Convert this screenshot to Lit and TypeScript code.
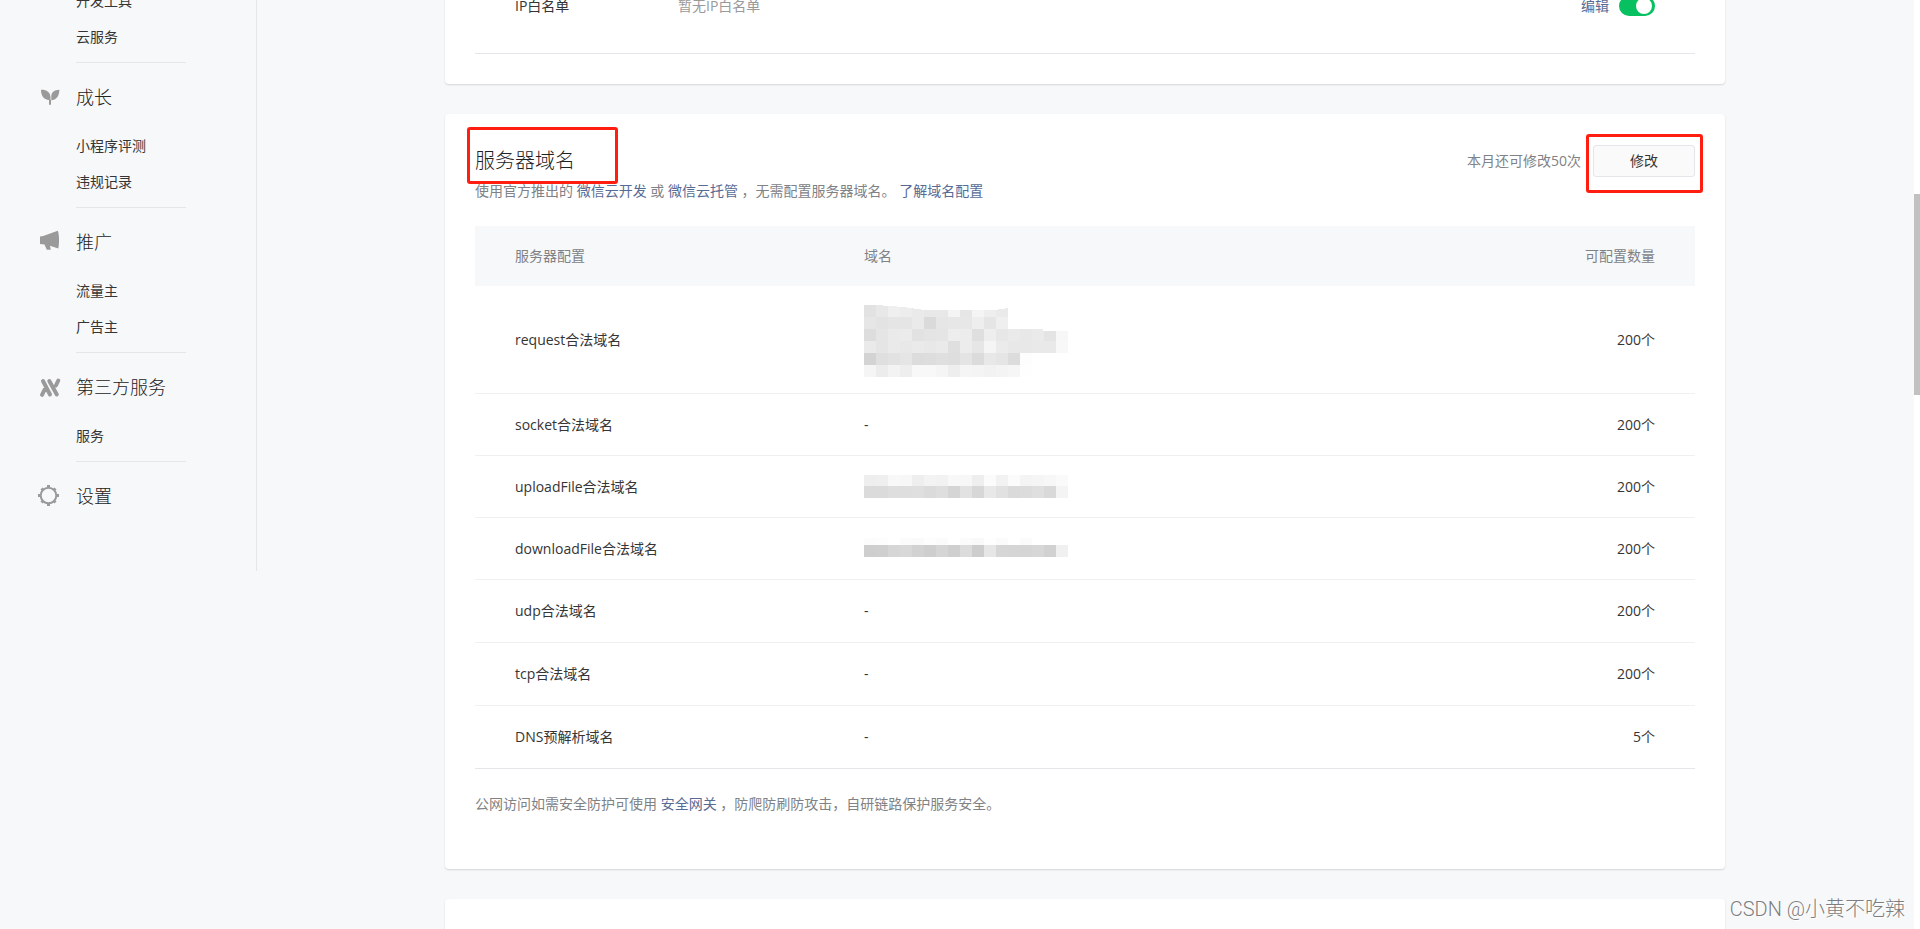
import { LitElement, html, css, svg } from "lit";
import { customElement } from "lit/decorators.js";

type Mosaic = { height: number; rows: { y: number; h: number; cells: string }[] };

/* Each cell is one hex pair: the grey level of a 12px block. */
const CELL = 12;
const mosaics: Record<string, Mosaic> = {
  request: {
    height: 74,
    rows: [
      { y: 2, h: 12, cells: "e2 e8 ef ed ea e8 e8 f4 e6 f4 ee ea" },
      { y: 14, h: 12, cells: "e6 e3 e5 e5 ea da e6 e7 e7 ee e5 ef" },
      { y: 26, h: 12, cells: "dd e5 ea eb e2 e4 e5 ed ec df ee e7 ea e8 ea e4 f7" },
      { y: 38, h: 12, cells: "ea e5 ea e8 ea e8 ea df ec e6 f5 eb e8 e8 e9 e9 f8" },
      { y: 50, h: 12, cells: "d3 df e2 e5 dc dd df de e4 db e8 e5 dc fd" },
      { y: 62, h: 12, cells: "f5 ec f3 ee f8 f8 f5 ee f5 f4 f2 f4 f6 fe" },
    ],
  },
  upload: {
    height: 24,
    rows: [
      { y: 0, h: 11, cells: "ee ef f8 f7 ee f3 f2 f8 f7 ee fb f2 fb f4 f5 f7 fa" },
      { y: 11, h: 12, cells: "db db de de df db de d5 e2 d7 e8 e1 da dc df d9 f4" },
    ],
  },
  download: {
    height: 32,
    rows: [
      { y: 5, h: 7, cells: "fc fd ff fb fa fd fb ff fb f9 fe fb ff fb ff ff ff" },
      { y: 12, h: 12, cells: "ce cf d6 d8 d2 ce d5 cf dc cd e6 d6 d5 d5 d7 d1 f0" },
    ],
  },
};

const icons = {
  sprout: svg`<path d="M1 2.700c5.500-.2 9.300 2.500 9.700 7.500.3-4.500 3.300-7.500 8.700-7.500-.2 6.500-3 10.300-8.400 10.500v4.500H9v-4.600C3.700 12.500 1 8.700 1 2.700z"/><path d="M10.900 6.500v6.500" stroke="#f7f8fa" stroke-width=".8"/>`,
  horn: svg`<path d="M0 4.500l3.200-.5L17.800-1.300C19.400 2 19.400 13 18.200 16.600L10 13.800l.8 4H6.800L4.500 12.600 0 12z"/>`,
  service: svg`<path d="M3 4l7 13.500M9.300 4l7.500 13.500M18.300 3.500L15.900 8.500M2 17.800L4.500 12.800" stroke="currentColor" stroke-width="4" stroke-linecap="round" fill="none"/>`,
  gear: svg`<g transform="translate(-1.500 -.5)"><circle cx="10" cy="10" r="7.800" fill="none" stroke="currentColor" stroke-width="2"/><path d="M10 -.5v3M10 17.500v3M-.5 10h3M17.500 10h3M3 3l1.800 1.800M15.200 15.200L17 17M17 3l-1.800 1.800M4.800 15.200L3 17" stroke="currentColor" stroke-width="3"/></g>`,
};

const sections: { title?: string; icon?: keyof typeof icons; items: string[] }[] = [
  { items: ["开发工具", "云服务"] },
  { title: "成长", icon: "sprout", items: ["小程序评测", "违规记录"] },
  { title: "推广", icon: "horn", items: ["流量主", "广告主"] },
  { title: "第三方服务", icon: "service", items: ["服务"] },
  { title: "设置", icon: "gear", items: [] },
];

const domains: { name: string; mosaic?: string; count: number }[] = [
  { name: "request合法域名", mosaic: "request", count: 200 },
  { name: "socket合法域名", count: 200 },
  { name: "uploadFile合法域名", mosaic: "upload", count: 200 },
  { name: "downloadFile合法域名", mosaic: "download", count: 200 },
  { name: "udp合法域名", count: 200 },
  { name: "tcp合法域名", count: 200 },
  { name: "DNS预解析域名", count: 5 },
];

@customElement("side-nav")
class SideNav extends LitElement {
  static styles = css`
    :host { display: block; }
    .nav { margin-top: -17px; padding-bottom: 57px; border-right: 1px solid #e4e6e9; }
    .section { padding-top: 16px; }
    .section:first-child { padding-top: 0; }
    .head { display: flex; align-items: center; height: 36px; padding-left: 38px; font-size: 18px; font-weight: 300; color: #222; margin: 0; }
    .icon { width: 22px; height: 22px; margin-right: 16px; color: #9a9a9a; fill: currentColor; overflow: visible; }
    .list { list-style: none; margin: 13px 70px 0 76px; padding: 0 0 7px; border-bottom: 1px solid #e4e6e9; }
    .section:first-child .list { margin-top: 0; }
    .link { display: block; line-height: 36px; color: inherit; text-decoration: none; }
  `;
  render() {
    return html`<nav class="nav">
      ${sections.map(
        (s) => html`<div class="section">
          ${s.title
            ? html`<h2 class="head">
                <svg class="icon" viewBox="-2 -1 22 22" aria-hidden="true">${icons[s.icon!]}</svg>${s.title}
              </h2>`
            : ""}
          ${s.items.length
            ? html`<ul class="list">${s.items.map((i) => html`<li><a class="link" href="#">${i}</a></li>`)}</ul>`
            : ""}
        </div>`
      )}
    </nav>`;
  }
}

@customElement("domain-table")
class DomainTable extends LitElement {
  static styles = css`
    :host { display: block; }
    .table { width: 100%; table-layout: fixed; border-collapse: separate; border-spacing: 0; }
    .name { width: 28.6%; }
    .th { height: 60px; background: #f7f8fa; color: #808285; font-weight: inherit; text-align: left; box-sizing: border-box; padding: 0 40px; }
    .td { height: 62px; box-sizing: border-box; padding: 0 40px; border-bottom: 1px solid #f0f0f0; }
    .tall .td { height: 108px; }
    .row:nth-child(n + 5) .td { height: 63px; }
    .row:last-child .td { border-bottom-color: #e4e6e9; }
    .end { text-align: right; }
    .mosaic { display: block; }
  `;
  mosaic(m: Mosaic) {
    return html`<svg class="mosaic" width="204" height=${m.height} shape-rendering="crispEdges" aria-hidden="true">
      ${m.rows.map((r) =>
        r.cells.split(" ").map(
          (c, i) => svg`<rect x=${i * CELL} y=${r.y} width=${CELL} height=${r.h} fill=${"#" + c + c + c}></rect>`
        )
      )}
      ${m.height === 74
        ? svg`<path d="M12 2H144V5L130 7H60L40 4zM179 26H204V28H179z" fill="#fff"></path>`
        : ""}
    </svg>`;
  }
  render() {
    return html`<table class="table">
      <thead>
        <tr>
          <th class="th name" scope="col">服务器配置</th>
          <th class="th" scope="col">域名</th>
          <th class="th end" scope="col">可配置数量</th>
        </tr>
      </thead>
      <tbody>
        ${domains.map(
          (d) => html`<tr class="row ${d.mosaic === "request" ? "tall" : ""}">
            <td class="td">${d.name}</td>
            <td class="td">${d.mosaic ? this.mosaic(mosaics[d.mosaic]) : "-"}</td>
            <td class="td end">${d.count}个</td>
          </tr>`
        )}
      </tbody>
    </table>`;
  }
}

@customElement("app-root")
class AppRoot extends LitElement {
  static styles = css`
    :host {
      display: block; position: relative; height: 100vh; overflow: hidden; background: #f7f8fa; color: #353535;
      font: 390 14px/22px "Open Sans", "Noto Sans CJK SC", sans-serif;
    }
    .page { display: grid; grid-template-columns: 257px minmax(0, 1fr); align-items: start; }
    .main { display: grid; gap: 30px; margin: -36px 195px 0 188px; }
    .card { background: #fff; border-radius: 4px; padding: 30px; box-shadow: 0 1px 2px rgba(0, 0, 0, 0.14); }
    .setting { display: flex; align-items: center; height: 24px; padding: 0 40px 35px; border-bottom: 1px solid #e4e6e9; }
    .label { width: 163px; }
    .value { flex: 1; color: #9a9a9a; }
    .link { color: #576b95; text-decoration: none; }
    .switch {
      appearance: none; display: flex; width: 36px; height: 20px; margin: 0 0 0 10px; padding: 2px 3px; box-sizing: border-box;
      justify-content: flex-end; border-radius: 10px; background: #07c160;
    }
    .switch::before { content: ""; width: 16px; height: 16px; border-radius: 50%; background: #fff; }
    .top { display: flex; align-items: center; height: 34px; }
    .title { flex: 1; margin: 0; font-size: 20px; font-weight: 300; color: #222; }
    .marked { position: relative; }
    .marked::after { content: ""; position: absolute; border: 3px solid #ff1e10; border-radius: 3px; pointer-events: none; }
    .title.marked::after { left: -8px; top: -23px; width: 145px; height: 51px; }
    .action.marked::after { left: -7px; top: -11px; width: 111px; height: 53px; }
    .muted { color: #808285; }
    .action { margin-left: 12px; }
    .button {
      display: block; width: 102px; height: 32px; padding: 0; border: 1px solid #e4e6e9; border-radius: 3px;
      background: #fafafa; color: inherit; font: inherit;
    }
    .desc { margin: 2px 0 24px; }
    .foot { margin: 24px 0; }
    .next { height: 60px; }
    .track { position: absolute; top: 0; right: 0; bottom: 0; width: 6px; background: #fff; }
    .thumb { height: 201px; margin-top: 194px; background: #c1c1c1; }
    .watermark {
      position: absolute; right: 15px; bottom: 8px; font-family: Roboto, "Noto Sans CJK SC", sans-serif;
      font-size: 20px; font-weight: 300; line-height: 24px; color: #7d7e80; text-shadow: 1px 1px 0 #fff;
    }
  `;
  render() {
    return html`
      <div class="page">
        <side-nav></side-nav>
        <main class="main">
          <section class="card">
            <div class="setting">
              <label class="label" for="ip">IP白名单</label>
              <span class="value">暂无IP白名单</span>
              <a class="link" href="#">编辑</a>
              <input class="switch" id="ip" type="checkbox" role="switch" checked />
            </div>
          </section>
          <section class="card">
            <div class="top">
              <h2 class="title marked">服务器域名</h2>
              <span class="muted">本月还可修改50次</span>
              <div class="action marked"><button class="button" type="button">修改</button></div>
            </div>
            <p class="desc muted">使用官方推出的 <a class="link" href="#">微信云开发</a> 或 <a class="link" href="#">微信云托管</a> ，无需配置服务器域名。 <a class="link" href="#">了解域名配置</a></p>
            <domain-table></domain-table>
            <p class="foot muted">公网访问如需安全防护可使用 <a class="link" href="#">安全网关</a> ，防爬防刷防攻击，自研链路保护服务安全。</p>
          </section>
          <section class="card next"></section>
        </main>
      </div>
      <div class="track"><div class="thumb"></div></div>
      <div class="watermark">CSDN @小黄不吃辣</div>
    `;
  }
}
